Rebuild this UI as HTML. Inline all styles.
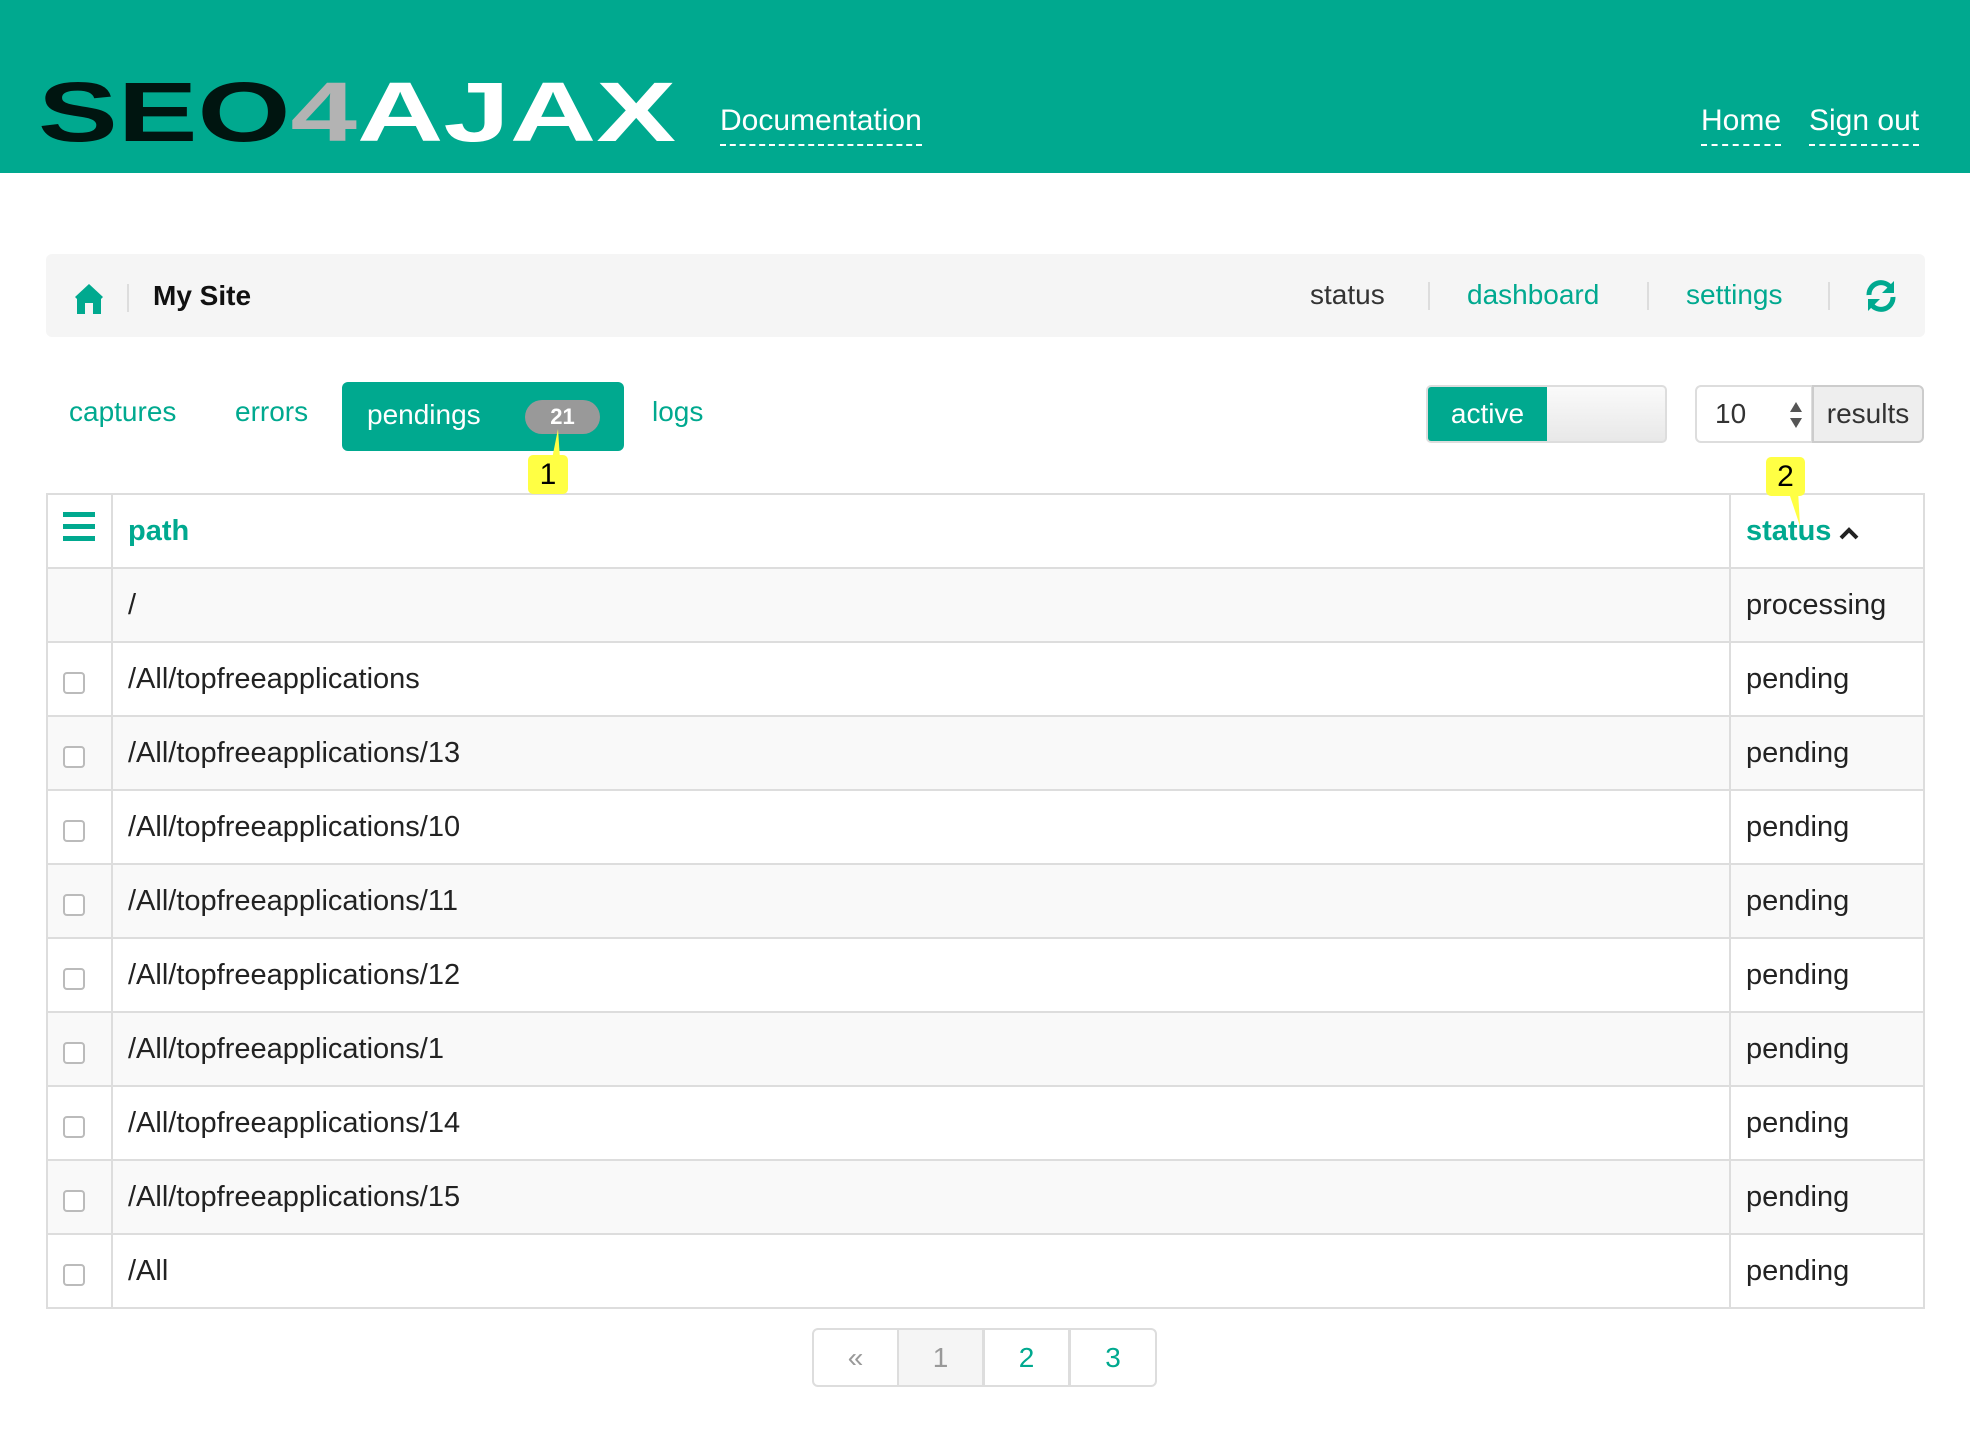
<!DOCTYPE html>
<html><head><meta charset="utf-8">
<style>
*{box-sizing:border-box;margin:0;padding:0}
body{width:1970px;height:1431px;background:#fff;font-family:"Liberation Sans",sans-serif;color:#222;position:relative;overflow:hidden}
.abs{position:absolute}
.hdr{left:0;top:0;width:1970px;height:173px;background:#00a98f}
.hl{color:#fff;font-size:30px;border-bottom:2px dashed #fff;padding-bottom:6px;line-height:34px}
.bc{left:46px;top:254px;width:1879px;height:83px;background:#f5f5f5;border-radius:6px}
.g{color:#00a98f}
.sep{width:2px;height:28px;background:#ddd}
.tab{font-size:28px;color:#00a98f}
table{border-collapse:collapse;position:absolute;left:46px;top:493px;width:1879px}
td{border:2px solid #ddd;height:74px;font-size:29px;padding-left:15px}
tr:nth-child(even) td{background:#f9f9f9}
tr:first-child td{background:#fff}
.cb{width:22px;height:22px;border:2px solid #bbb;border-radius:4px;display:inline-block;background:#fff;vertical-align:-6px}
.tip{background:#ffff44;border-radius:5px;font-size:30px;color:#000;text-align:center;line-height:39px;z-index:5}
.pg{top:1328px;height:59px;width:87px;border:2px solid #ddd;font-size:28px;text-align:center;line-height:55px}
</style></head><body>
<div class="abs hdr"></div>
<svg class="abs" style="left:38px;top:70px" width="650" height="80">
<text x="0" y="71" font-family="Liberation Sans" font-weight="bold" font-size="84" textLength="638" lengthAdjust="spacingAndGlyphs"><tspan fill="#001510">SEO</tspan><tspan fill="#b3b3b3">4</tspan><tspan fill="#fff">AJAX</tspan></text>
</svg>
<div class="abs hl" style="left:720px;top:104px">Documentation</div>
<div class="abs hl" style="left:1701px;top:104px">Home</div>
<div class="abs hl" style="left:1809px;top:104px">Sign out</div>

<div class="abs bc"></div>
<svg class="abs" style="left:74px;top:283px" width="30" height="32" viewBox="0 0 30 32"><path d="M15 1 L29 14 L27 16 V31 H19 V20 H11 V31 H3 V16 L1 14 Z" fill="#00a98f"/></svg>
<div class="abs sep" style="left:127px;top:284px"></div>
<div class="abs" style="left:153px;top:280px;font-size:28px;font-weight:bold;color:#111">My Site</div>
<div class="abs" style="left:1310px;top:279px;font-size:28px;color:#333">status</div>
<div class="abs sep" style="left:1428px;top:282px"></div>
<div class="abs g" style="left:1467px;top:279px;font-size:28px">dashboard</div>
<div class="abs sep" style="left:1647px;top:282px"></div>
<div class="abs g" style="left:1686px;top:279px;font-size:28px">settings</div>
<div class="abs sep" style="left:1828px;top:282px"></div>
<svg class="abs" style="left:1864px;top:279px" width="34" height="34" viewBox="0 0 34 34"><path d="M5 16 A12 12 0 0 1 27 9" stroke="#00a98f" stroke-width="5" fill="none"/><path d="M30 2 V14 H18 Z" fill="#00a98f"/><path d="M29 18 A12 12 0 0 1 7 25" stroke="#00a98f" stroke-width="5" fill="none"/><path d="M4 32 V20 H16 Z" fill="#00a98f"/></svg>

<div class="abs tab" style="left:69px;top:396px">captures</div>
<div class="abs tab" style="left:235px;top:396px">errors</div>
<div class="abs" style="left:342px;top:382px;width:282px;height:69px;background:#00a98f;border-radius:6px"></div>
<div class="abs" style="left:367px;top:399px;font-size:28px;color:#fff">pendings</div>
<div class="abs" style="left:525px;top:400px;width:75px;height:34px;background:#999;border-radius:17px;color:#fff;font-weight:bold;font-size:22px;text-align:center;line-height:34px">21</div>
<div class="abs tab" style="left:652px;top:396px">logs</div>
<svg class="abs" style="left:540px;top:425px" width="30" height="35"><path d="M18 4 L12 34 L20 34 Z" fill="#ffff44"/></svg>
<div class="abs tip" style="left:528px;top:455px;width:40px;height:39px">1</div>

<div class="abs" style="left:1426px;top:385px;width:241px;height:58px;border:2px solid #ddd;border-radius:5px;background:linear-gradient(#fafafa,#e8e8e8);overflow:hidden"><div style="width:119px;height:100%;background:#00a98f;color:#fff;font-size:28px;line-height:54px;text-align:center">active</div></div>
<div class="abs" style="left:1695px;top:385px;width:118px;height:58px;border:2px solid #ddd;border-radius:6px 0 0 6px;background:#fff;font-size:28px;line-height:54px;padding-left:18px;color:#333">10</div>
<svg class="abs" style="left:1789px;top:402px" width="14" height="26"><path d="M7 0 L13 10 H1Z M7 26 L13 16 H1Z" fill="#555"/></svg>
<div class="abs" style="left:1812px;top:385px;width:112px;height:58px;border:2px solid #ccc;border-radius:0 6px 6px 0;background:#eee;font-size:28px;line-height:54px;text-align:center;color:#333">results</div>

<table>
<tr><td style="width:65px;padding-left:15px"><svg width="32" height="30"><rect y="0" width="32" height="5" fill="#00a98f"/><rect y="12" width="32" height="5" fill="#00a98f"/><rect y="24" width="32" height="5" fill="#00a98f"/></svg></td><td class="g" style="font-weight:bold">path</td><td style="width:194px;font-weight:bold" class="g">status <svg width="20" height="14"><path d="M2 12 L10 4 L18 12" stroke="#222" stroke-width="4" fill="none"/></svg></td></tr>
<tr><td></td><td>/</td><td>processing</td></tr>
<tr><td><span class="cb"></span></td><td>/All/topfreeapplications</td><td>pending</td></tr>
<tr><td><span class="cb"></span></td><td>/All/topfreeapplications/13</td><td>pending</td></tr>
<tr><td><span class="cb"></span></td><td>/All/topfreeapplications/10</td><td>pending</td></tr>
<tr><td><span class="cb"></span></td><td>/All/topfreeapplications/11</td><td>pending</td></tr>
<tr><td><span class="cb"></span></td><td>/All/topfreeapplications/12</td><td>pending</td></tr>
<tr><td><span class="cb"></span></td><td>/All/topfreeapplications/1</td><td>pending</td></tr>
<tr><td><span class="cb"></span></td><td>/All/topfreeapplications/14</td><td>pending</td></tr>
<tr><td><span class="cb"></span></td><td>/All/topfreeapplications/15</td><td>pending</td></tr>
<tr><td><span class="cb"></span></td><td>/All</td><td>pending</td></tr>
</table>
<svg class="abs" style="left:1780px;top:490px;z-index:4" width="30" height="40"><path d="M8 0 L20 36 L18 0 Z" fill="#ffff44"/></svg>
<div class="abs tip" style="left:1766px;top:457px;width:39px;height:39px">2</div>

<div class="abs pg" style="left:812px;border-radius:6px 0 0 6px;color:#999">«</div>
<div class="abs pg" style="left:897px;background:#f5f5f5;color:#999">1</div>
<div class="abs pg g" style="left:983px">2</div>
<div class="abs pg g" style="left:1069px;width:88px;border-radius:0 6px 6px 0">3</div>
</body></html>
